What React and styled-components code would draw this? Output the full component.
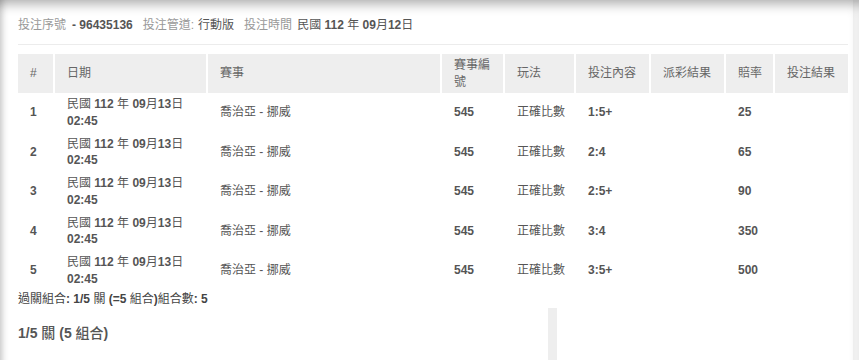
import React from 'react';
import styled, { createGlobalStyle } from 'styled-components';

const GlobalStyle = createGlobalStyle`
  body {
    margin: 0;
    background: #fff;
    font-family: "Liberation Sans", "Noto Sans CJK TC", sans-serif;
    color: #555;
  }
`;

const Page = styled.div`
  display: flex;
  min-height: 100vh;
`;

const Panel = styled.div`
  flex: 1;
  padding: 16px 5px 0 18px;
  background: #fff;
  box-shadow: inset 0 12px 12px -8px rgba(0, 0, 0, 0.32),
    inset 8px 0 7px -6px rgba(0, 0, 0, 0.22);
`;

const Gutter = styled.div`
  width: 6px;
  background: #f3f3f3;
  box-shadow: inset 0 12px 12px -8px rgba(0, 0, 0, 0.32);
`;

const InfoBar = styled.div`
  font-size: 12px;
  line-height: 18px;
  color: #555;
  white-space: nowrap;
`;

const Label = styled.span`
  color: #999;
  margin-right: ${(p) => p.$gap || 4}px;
`;

const Value = styled.span`
  margin-right: 10px;
`;

const Divider = styled.hr`
  border: 0;
  border-top: 1px solid #ececec;
  margin: 10px 0 9px;
`;

const Table = styled.table`
  width: 830px;
  table-layout: fixed;
  border-collapse: separate;
  border-spacing: 0;
  font-size: 12px;
`;

const Th = styled.th`
  box-sizing: border-box;
  width: ${(p) => p.$w}px;
  background: #eeeeee;
  color: #666;
  font-weight: normal;
  text-align: left;
  padding: 2.5px 4px 2.5px 12px;
  height: 39px;
  line-height: 17px;
  border-left: 2px solid #fff;
  &:first-child {
    border-left: 0;
  }
`;

const Td = styled.td`
  padding: 3px 2px 3px 12px;
  line-height: 16.75px;
  color: #555;
  vertical-align: middle;
  border-left: ${(p) => (p.$first ? 0 : 2)}px solid transparent;
`;

const Strong = styled.b`
  font-weight: bold;
`;

const Summary = styled.div`
  font-size: 12px;
  line-height: 17px;
  color: #444;
`;

const Lower = styled.div`
  display: grid;
  grid-template-columns: 530px 9px;
  min-height: 60px;
`;

const Heading = styled.h3`
  margin: 14px 0 0;
  font-size: 14px;
  line-height: 22px;
  font-weight: 500;
  color: #555;
`;

const SideBar = styled.div`
  background: #eeeeee;
`;

// ascii runs bold, CJK stays regular
const Mixed = ({ text }) =>
  text.split(/([\x20-\x7E]*[\x21-\x7E][\x20-\x7E]*)/).map((part, i) =>
    /[\x21-\x7E]/.test(part) ? <Strong key={i}>{part}</Strong> : <span key={i}>{part}</span>
  );

const columns = [
  { title: '#', w: 35 },
  { title: '日期', w: 153 },
  { title: '賽事', w: 234 },
  { title: '賽事編號', w: 63 },
  { title: '玩法', w: 71 },
  { title: '投注內容', w: 75 },
  { title: '派彩結果', w: 75 },
  { title: '賠率', w: 49 },
  { title: '投注結果', w: 75 },
];

const rows = [
  { pick: '1:5+', odds: '25' },
  { pick: '2:4', odds: '65' },
  { pick: '2:5+', odds: '90' },
  { pick: '3:4', odds: '350' },
  { pick: '3:5+', odds: '500' },
];

const App = () => {
  return (
    <>
      <GlobalStyle />
      <Page>
        <Panel>
          <InfoBar>
            <Label $gap={6}>投注序號</Label>
            <Value><Strong>- 96435136</Strong></Value>
            <Label>投注管道:</Label>
            <Value>行動版</Value>
            <Label $gap={5}>投注時間</Label>
            <Value><Mixed text="民國 112 年 09月12日" /></Value>
          </InfoBar>
          <Divider />
          <Table>
            <thead>
              <tr>
                {columns.map((c) => (
                  <Th key={c.title} $w={c.w}>{c.title}</Th>
                ))}
              </tr>
            </thead>
            <tbody>
              {rows.map((r, i) => (
                <tr key={i}>
                  <Td $first><Strong>{i + 1}</Strong></Td>
                  <Td>
                    <Mixed text="民國 112 年 09月13日" />
                    <br />
                    <Strong>02:45</Strong>
                  </Td>
                  <Td>喬治亞 - 挪威</Td>
                  <Td><Strong>545</Strong></Td>
                  <Td>正確比數</Td>
                  <Td><Strong>{r.pick}</Strong></Td>
                  <Td></Td>
                  <Td><Strong>{r.odds}</Strong></Td>
                  <Td></Td>
                </tr>
              ))}
            </tbody>
          </Table>
          <Summary>
            <Mixed text="過關組合: 1/5 關 (=5 組合)組合數: 5" />
          </Summary>
          <Lower>
            <Heading>
              <Mixed text="1/5 關 (5 組合)" />
            </Heading>
            <SideBar />
          </Lower>
        </Panel>
        <Gutter />
      </Page>
    </>
  );
};

export default App;
